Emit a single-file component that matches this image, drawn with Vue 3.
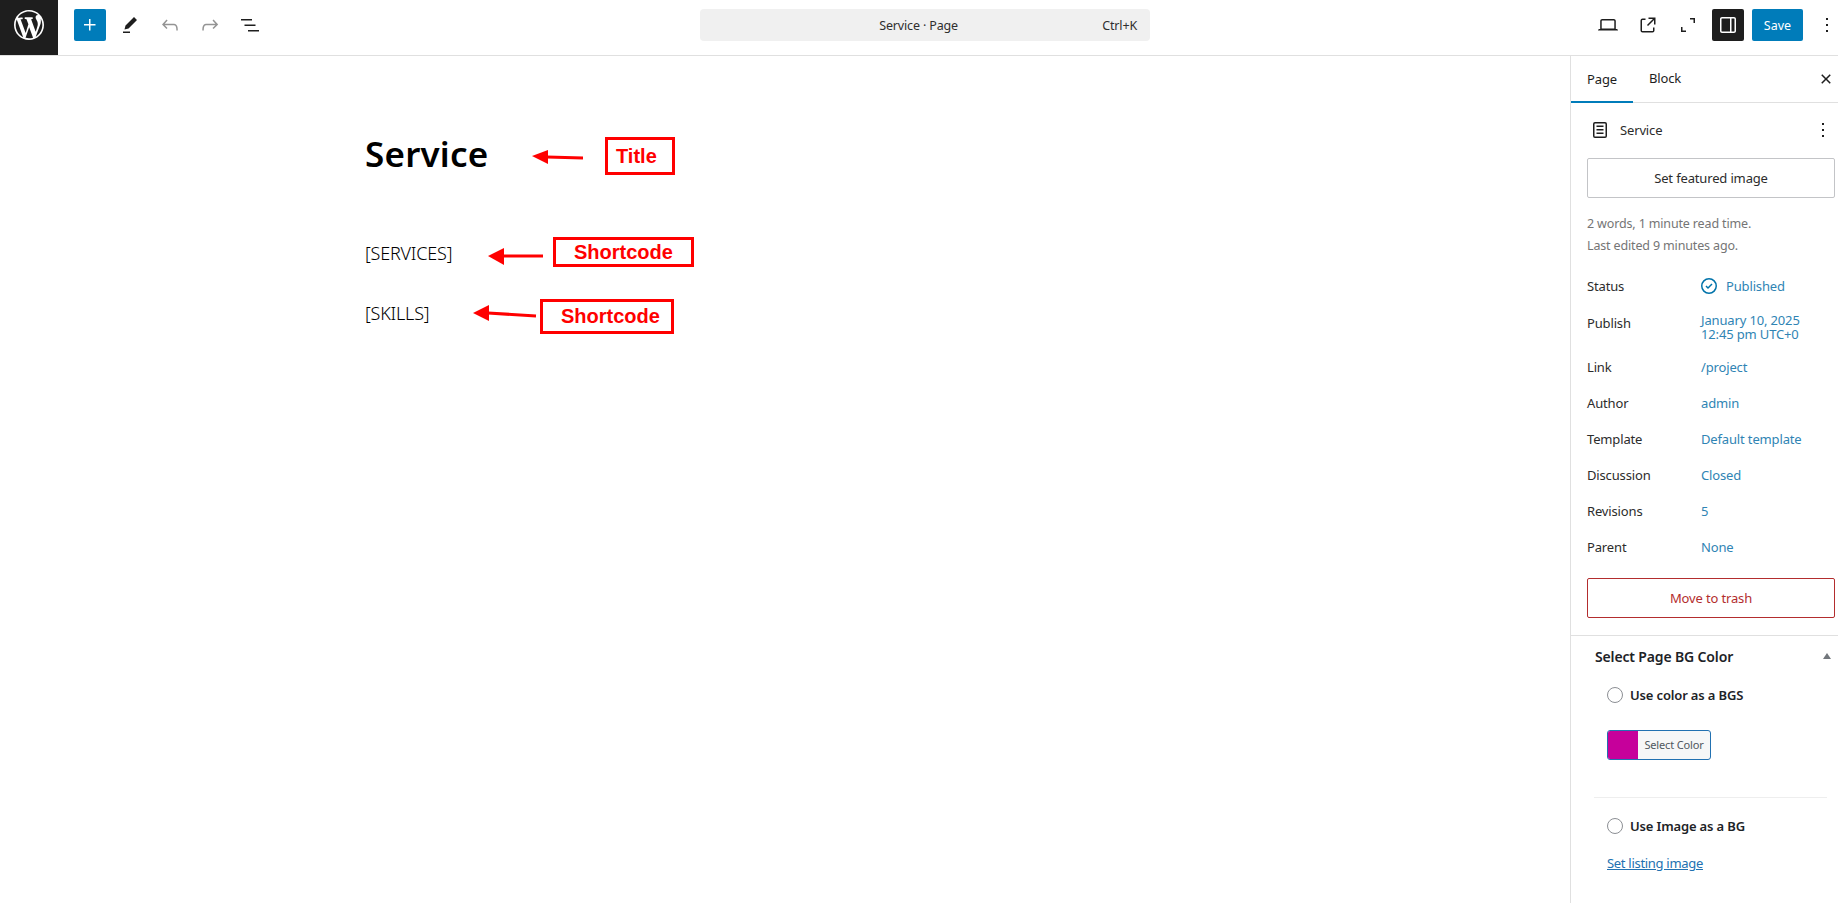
<template>
  <div class="editor">
    <header class="topbar">
      <div class="topbar-left">
        <div class="wp-logo">
          <svg viewBox="0 0 20 20" width="30" height="30"><path fill="#fff" d="M20 10c0-5.51-4.49-10-10-10C4.48 0 0 4.49 0 10c0 5.52 4.48 10 10 10 5.51 0 10-4.48 10-10zM7.78 15.37L4.37 6.22c.55-.02 1.17-.08 1.17-.08.5-.06.44-1.13-.06-1.11 0 0-1.45.11-2.37.11-.18 0-.37 0-.58-.01C4.12 2.69 6.87 1.07 10 1.07c2.33 0 4.45.87 6.05 2.34-.68-.11-1.65.39-1.65 1.58 0 .74.45 1.36.9 2.1.35.61.55 1.36.55 2.46 0 1.49-1.4 5-1.4 5l-3.03-8.37c.54-.02.82-.17.82-.17.5-.05.44-1.25-.06-1.22 0 0-1.44.12-2.38.12-.87 0-2.33-.12-2.33-.12-.5-.03-.56 1.2-.06 1.22l.92.08 1.26 3.41zM17.41 10c.24-.64.74-1.87.43-4.25.7 1.29 1.05 2.71 1.05 4.25 0 3.29-1.73 6.24-4.4 7.78.97-2.59 1.94-5.2 2.92-7.78zM6.1 18.09C3.12 16.65 1.11 13.53 1.11 10c0-1.3.23-2.48.72-3.59C3.25 10.3 4.67 14.2 6.1 18.09zm4.03-6.63l2.58 6.98c-.86.29-1.76.45-2.71.45-.79 0-1.57-.11-2.29-.33.81-2.38 1.62-4.74 2.42-7.1z"/></svg>
        </div>
        <div class="tools">
          <button class="icon-btn primary">
            <svg viewBox="0 0 24 24" width="24" height="24"><path fill="#fff" d="M11 12.5V17.5H12.5V12.5H17.5V11H12.5V6H11V11H6V12.5H11Z"/></svg>
          </button>
          <button v-for="t in leftTools" :key="t.name" class="icon-btn">
            <svg viewBox="0 0 24 24" width="24" height="24"><path :fill="t.muted ? '#949494' : '#1e1e1e'" :d="t.d"/></svg>
          </button>
        </div>
      </div>
      <div class="command-bar">
        <span class="command-title">Service · Page</span>
        <span class="command-key">Ctrl+K</span>
      </div>
      <div class="topbar-right">
        <button v-for="t in rightTools" :key="t.name" class="icon-btn">
          <svg viewBox="0 0 24 24" width="24" height="24"><path fill="#1e1e1e" :d="t.d"/></svg>
        </button>
        <button class="icon-btn dark">
          <svg viewBox="0 0 24 24" width="24" height="24"><path fill="#fff" d="M18 4H6c-1.1 0-2 .9-2 2v12c0 1.1.9 2 2 2h12c1.1 0 2-.9 2-2V6c0-1.1-.9-2-2-2zm-4 14.5H6c-.3 0-.5-.2-.5-.5V6c0-.3.2-.5.5-.5h8v13zm4.5-.5c0 .3-.2.5-.5.5h-2.5v-13H18c.3 0 .5.2.5.5v12z"/></svg>
        </button>
        <button class="save-btn">Save</button>
        <button class="more-btn">
          <svg viewBox="0 0 24 24" width="24" height="24"><path fill="#1e1e1e" :d="dots"/></svg>
        </button>
      </div>
    </header>

    <div class="workspace">
      <main class="canvas">
        <h1 class="post-title">Service</h1>
        <p class="shortcode first">[SERVICES]</p>
        <p class="shortcode">[SKILLS]</p>

        <svg class="arrows" width="800" height="320">
          <g v-for="a in arrows" :key="a.head">
            <polygon fill="#ff0000" :points="a.head"/>
            <line stroke="#ff0000" stroke-width="3" :x1="a.x1" :y1="a.y1" :x2="a.x2" :y2="a.y2"/>
          </g>
        </svg>
        <div class="note note-title">Title</div>
        <div class="note note-services">Shortcode</div>
        <div class="note note-skills">Shortcode</div>
      </main>

      <aside class="sidebar">
        <div class="tabs">
          <span class="tab active">Page</span>
          <span class="tab block-tab">Block</span>
          <svg class="tabs-close" viewBox="0 0 24 24" width="24" height="24"><path fill="#1e1e1e" d="M12 13.06l3.712 3.713 1.061-1.06L13.061 12l3.712-3.712-1.06-1.06L12 10.938 8.288 7.227l-1.061 1.06L10.939 12l-3.712 3.712 1.06 1.061L12 13.061z"/></svg>
        </div>

        <section class="summary">
          <div class="post-row">
            <svg viewBox="0 0 24 24" width="24" height="24"><path fill="#1e1e1e" d="M15.5 7.5h-7V9h7V7.5Zm-7 3.5h7v1.5h-7V11Zm7 3.5h-7V16h7v-1.5Z"/><path fill="#1e1e1e" fill-rule="evenodd" d="M17 4H7a2 2 0 0 0-2 2v12a2 2 0 0 0 2 2h10a2 2 0 0 0 2-2V6a2 2 0 0 0-2-2ZM7 5.5h10a.5.5 0 0 1 .5.5v12a.5.5 0 0 1-.5.5H7a.5.5 0 0 1-.5-.5V6a.5.5 0 0 1 .5-.5Z"/></svg>
            <span class="post-name">Service</span>
            <svg class="post-more" viewBox="0 0 24 24" width="24" height="24"><path fill="#1e1e1e" :d="dots"/></svg>
          </div>
          <div class="wide-btn featured">Set featured image</div>
          <p class="hint">2 words, 1 minute read time.<br>Last edited 9 minutes ago.</p>

          <div class="fields">
            <div v-for="f in fields" :key="f.label" class="field" :class="{ tall: f.lines }">
              <span class="field-label">{{ f.label }}</span>
              <span v-if="f.lines" class="field-value multi">
                <span v-for="l in f.lines" :key="l">{{ l }}</span>
              </span>
              <span v-else class="field-value">
                <svg v-if="f.published" viewBox="0 0 24 24" width="24" height="24"><path fill="#0073aa" fill-rule="evenodd" d="M12 18.5a6.5 6.5 0 1 1 0-13 6.5 6.5 0 0 1 0 13ZM4 12a8 8 0 1 1 16 0 8 8 0 0 1-16 0Zm11.53-1.47-1.06-1.06L11 12.94l-1.47-1.47-1.06 1.06L11 15.06l4.53-4.53Z"/></svg>
                {{ f.value }}
              </span>
            </div>
          </div>

          <div class="wide-btn danger">Move to trash</div>
        </section>

        <section class="metabox">
          <div class="metabox-head">
            <span>Select Page BG Color</span>
            <i class="caret"></i>
          </div>
          <div class="metabox-body">
            <label class="radio-row"><i class="radio"></i>Use color as a BGS</label>
            <div class="color-btn"><i class="swatch"></i><span>Select Color</span></div>
          </div>
          <hr class="metabox-rule">
          <div class="metabox-body">
            <label class="radio-row second"><i class="radio"></i>Use Image as a BG</label>
            <a class="listing-link">Set listing image</a>
          </div>
        </section>
      </aside>
    </div>
  </div>
</template>

<script setup>
const dots = 'M13 19h-2v-2h2v2zm0-6h-2v-2h2v2zm0-6h-2V5h2v2z'

const leftTools = [
  { name: 'edit', d: 'm19 7-3-3-8.5 8.5-1 4 4-1L19 7Zm-7 11.5H5V20h7v-1.5Z' },
  { name: 'undo', muted: true, d: 'M18.3 11.7c-.6-.6-1.4-.9-2.3-.9H6.7l2.9-3.3-1.1-1-4.5 5L8.5 16l1-1-2.7-2.7H16c.5 0 .9.2 1.3.5 1 1 1 3.4 1 4.5v.3h1.5v-.2c0-1.5 0-4.3-1.5-5.7z' },
  { name: 'redo', muted: true, d: 'M15.6 6.5l-1.1 1 2.9 3.3H8c-.9 0-1.7.3-2.3.9-1.4 1.5-1.4 4.2-1.4 5.6v.2h1.5v-.3c0-1.1 0-3.5 1-4.5.3-.3.7-.5 1.3-.5h9.2L14.5 15l1.1 1.1 4.6-4.6-4.6-5z' },
  { name: 'list', d: 'M3 6h11v1.5H3V6Zm3.5 5.5h11V13h-11v-1.5ZM21 17H10v1.5h11V17Z' }
]

const rightTools = [
  { name: 'desktop', d: 'M20.5 16h-.7V8c0-1.1-.9-2-2-2H6.2c-1.1 0-2 .9-2 2v8h-.7c-.8 0-1.5.7-1.5 1.5h20c0-.8-.7-1.5-1.5-1.5zM5.7 8c0-.3.2-.5.5-.5h11.6c.3 0 .5.2.5.5v7.6H5.7V8z' },
  { name: 'preview', d: 'M19.5 4.5h-7V6h4.44l-5.97 5.97 1.06 1.06L18 7.06v4.44h1.5v-7Zm-13 1a2 2 0 0 0-2 2v10a2 2 0 0 0 2 2h10a2 2 0 0 0 2-2v-3H17v3a.5.5 0 0 1-.5.5h-10a.5.5 0 0 1-.5-.5v-10a.5.5 0 0 1 .5-.5h3V5.5h-3Z' },
  { name: 'fullscreen', d: 'M14 5h5v5h-1.5V6.5H14V5ZM5 14h1.5v3.5H10V19H5v-5Z' }
]

const fields = [
  { label: 'Status', value: 'Published', published: true },
  { label: 'Publish', lines: ['January 10, 2025', '12:45 pm UTC+0'] },
  { label: 'Link', value: '/project' },
  { label: 'Author', value: 'admin' },
  { label: 'Template', value: 'Default template' },
  { label: 'Discussion', value: 'Closed' },
  { label: 'Revisions', value: '5' },
  { label: 'Parent', value: 'None' }
]

// page coordinates minus the 56px top bar
const arrows = [
  { head: '532,100 548,94 548,108', x1: 547, y1: 101, x2: 583, y2: 102 },
  { head: '488,200 504,192 504,209', x1: 503, y1: 200, x2: 543, y2: 200 },
  { head: '473,257 489,249 489,265', x1: 488, y1: 257, x2: 536, y2: 260 }
]
</script>

<style scoped>
.editor {
  width: 1838px;
  height: 903px;
  overflow: hidden;
  display: flex;
  flex-direction: column;
  background: #fff;
  color: #2c2c2c;
  font-family: "Noto Sans", "Open Sans", sans-serif;
  font-size: 13px;
  letter-spacing: -0.15px;
}

.topbar {
  height: 46px;
  padding-top: 9px;
  flex-shrink: 0;
  display: grid;
  grid-template-columns: 700px 450px 1fr;
  align-items: start;
  border-bottom: 1px solid #e0e0e0;
  box-sizing: content-box;
}

.topbar-left {
  display: flex;
  align-items: center;
}

.wp-logo {
  width: 58px;
  height: 55px;
  margin: -9px 0 -14px;
  background: #1e1e1e;
  display: flex;
  align-items: center;
  justify-content: center;
  padding-right: 1px;
  padding-bottom: 5px;
  box-sizing: border-box;
}

.tools {
  display: flex;
  gap: 8px;
  margin-left: 16px;
}

.icon-btn {
  width: 32px;
  height: 32px;
  padding: 4px;
  border: 0;
  border-radius: 2px;
  background: none;
  display: flex;
}

.icon-btn.primary {
  background: #007cba;
}

.icon-btn.dark {
  background: #1e1e1e;
}

.command-bar {
  height: 32px;
  display: flex;
  align-items: center;
  background: #f0f0f0;
  border-radius: 4px;
  padding: 1px 13px 0 35px;
  box-sizing: border-box;
  color: #2f2f2f;
  font-size: 12.5px;
}

.command-title {
  flex: 1;
  text-align: center;
}

.topbar-right {
  display: flex;
  align-items: center;
  gap: 8px;
  padding-left: 442px;
}

.save-btn {
  width: 51px;
  height: 32px;
  border: 0;
  border-radius: 2px;
  padding: 0;
  background: #007cba;
  color: #fff;
  font: inherit;
  font-size: 12.5px;
}

.more-btn {
  width: 24px;
  height: 32px;
  margin-left: 4px;
  padding: 4px 0;
  border: 0;
  background: none;
  display: flex;
}

.workspace {
  flex: 1;
  display: flex;
  min-height: 0;
}

.canvas {
  position: relative;
  flex: 1;
  padding: 73px 0 0 365px;
}

.post-title {
  margin: 0;
  font-size: 35px;
  line-height: 50px;
  font-weight: 600;
  letter-spacing: 0.2px;
  color: #000;
}

.shortcode {
  margin: 0 0 35px;
  font-size: 18px;
  line-height: 25px;
  font-weight: 300;
  letter-spacing: -0.2px;
  color: #000;
}

.shortcode.first {
  margin-top: 62px;
}

.arrows {
  position: absolute;
  left: 0;
  top: 0;
}

.note {
  position: absolute;
  box-sizing: border-box;
  border: 3px solid #ff0000;
  color: #ff0000;
  font-family: "Liberation Sans", Arial, sans-serif;
  font-size: 20px;
  font-weight: 700;
  letter-spacing: 0;
  display: flex;
  align-items: center;
}

.note-title {
  left: 605px;
  top: 81px;
  width: 70px;
  height: 38px;
  padding-left: 8px;
}

.note-services {
  left: 553px;
  top: 181px;
  width: 141px;
  height: 30px;
  padding-left: 18px;
}

.note-skills {
  left: 540px;
  top: 243px;
  width: 134px;
  height: 35px;
  padding-left: 18px;
}

.sidebar {
  width: 268px;
  flex-shrink: 0;
  border-left: 1px solid #e0e0e0;
  box-sizing: border-box;
}

.tabs {
  height: 47px;
  display: flex;
  align-items: stretch;
  border-bottom: 1px solid #e0e0e0;
  box-sizing: border-box;
  position: relative;
}

.tab {
  width: 62px;
  padding-bottom: 2px;
  box-sizing: border-box;
  display: flex;
  align-items: center;
  justify-content: center;
  color: #1e1e1e;
  font-size: 13px;
}

.tab.active {
  margin-bottom: -1px;
  border-bottom: 2px solid #007cba;
  padding-bottom: 0;
}

.tab.block-tab {
  margin-left: 1px;
}

.tabs-close {
  margin: 11px 0 0 auto;
}

.summary {
  padding: 15px 3px 17px 16px;
  border-bottom: 1px solid #e0e0e0;
}

.post-row {
  display: flex;
  align-items: center;
  height: 24px;
  margin-left: 1px;
}

.post-name {
  margin-left: 8px;
  font-size: 13px;
}

.post-more {
  margin-left: auto;
}

.wide-btn {
  height: 40px;
  display: flex;
  align-items: center;
  justify-content: center;
  box-sizing: border-box;
  border: 1px solid #c3c4c7;
  border-radius: 2px;
  font-size: 13px;
  color: #2c2c2c;
}

.wide-btn.featured {
  margin-top: 16px;
}

.wide-btn.danger {
  margin-top: 15px;
  border-color: #b32d2e;
  color: #b32d2e;
}

.hint {
  margin: 15px 0 13px;
  font-size: 12.5px;
  line-height: 22px;
  color: #757575;
}

.fields {
  display: flex;
  flex-direction: column;
  gap: 4px;
}

.field {
  display: flex;
  height: 32px;
  align-items: center;
}

.field.tall {
  height: 41px;
  align-items: flex-start;
}

.field.tall .field-label {
  margin-top: 8px;
}

.field-label {
  width: 114px;
  flex-shrink: 0;
}

.field-value {
  display: flex;
  align-items: center;
  color: #2f84b4;
}

.field-value svg {
  margin: 0 5px 0 -4px;
}

.field-value.multi {
  flex-direction: column;
  align-items: flex-start;
  line-height: 14px;
  padding-top: 7px;
}

.metabox {
  padding: 0 12px 0 24px;
}

.metabox-head {
  height: 40px;
  display: flex;
  align-items: center;
  justify-content: space-between;
  font-size: 14px;
  font-weight: 600;
  color: #1d2327;
}

.caret {
  width: 0;
  height: 0;
  margin-right: -5px;
  border: 4px solid transparent;
  border-top: 0;
  border-bottom: 6px solid #72777c;
}

.metabox-body {
  padding-left: 12px;
}

.radio-row {
  display: flex;
  align-items: center;
  gap: 7px;
  height: 16px;
  margin-top: 11px;
  font-weight: 600;
  color: #1d2327;
}

.radio {
  width: 16px;
  height: 16px;
  box-sizing: border-box;
  border: 1px solid #8c8f94;
  border-radius: 50%;
  background: #fff;
}

.color-btn {
  width: 104px;
  height: 30px;
  margin-top: 27px;
  padding-bottom: 1px;
  box-sizing: border-box;
  display: flex;
  border: 1px solid #2271b1;
  border-radius: 3px;
  background: #f6f7f7;
  overflow: hidden;
  font-size: 11px;
  color: #50575e;
}

.swatch {
  width: 30px;
  margin-bottom: -1px;
  background: #c6009b;
}

.color-btn span {
  flex: 1;
  align-self: center;
  text-align: center;
}

.metabox-rule {
  width: 233px;
  margin: 37px 0 0 -1px;
  border: 0;
  border-top: 1px solid #eeeeee;
}

.radio-row.second {
  margin-top: 20px;
}

.listing-link {
  display: block;
  margin-top: 20px;
  color: #2271b1;
  letter-spacing: -0.3px;
  text-decoration: underline;
}
</style>

<style>
html, body {
  margin: 0;
  overflow: hidden;
}
</style>
